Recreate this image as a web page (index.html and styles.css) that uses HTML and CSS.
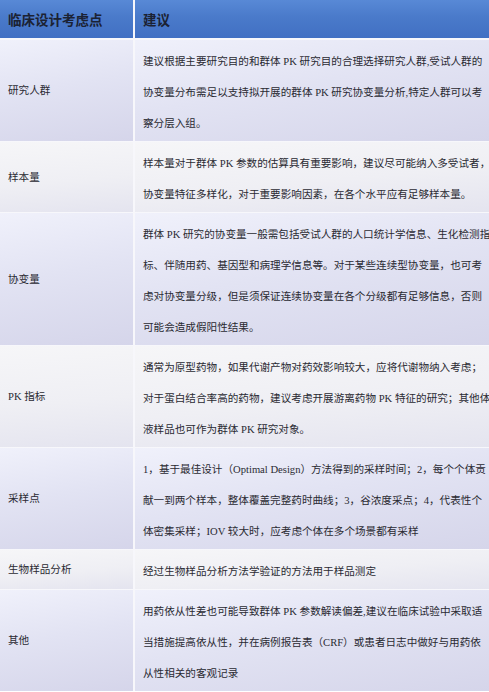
FILE: index.html
```html
<!DOCTYPE html>
<html lang="zh-CN">
<head>
<meta charset="utf-8">
<title>临床设计考虑点</title>
<link rel="stylesheet" href="styles.css">
</head>
<body>
<div class="table">
  <div class="hcell">临床设计考虑点</div>
  <div class="hcell">建议</div>

  <div class="cell label tint">研究人群</div>
  <div class="cell text tint">建议根据主要研究目的和群体 PK 研究目的合理选择研究人群,受试人群的<br>协变量分布需足以支持拟开展的群体 PK 研究协变量分析,特定人群可以考<br>察分层入组。</div>

  <div class="cell label pale">样本量</div>
  <div class="cell text pale">样本量对于群体 PK 参数的估算具有重要影响，建议尽可能纳入多受试者，<br>协变量特征多样化，对于重要影响因素，在各个水平应有足够样本量。</div>

  <div class="cell label tint">协变量</div>
  <div class="cell text tint">群体 PK 研究的协变量一般需包括受试人群的人口统计学信息、生化检测指<br>标、伴随用药、基因型和病理学信息等。对于某些连续型协变量，也可考<br>虑对协变量分级，但是须保证连续协变量在各个分级都有足够信息，否则<br>可能会造成假阳性结果。</div>

  <div class="cell label pale">PK 指标</div>
  <div class="cell text pale">通常为原型药物，如果代谢产物对药效影响较大，应将代谢物纳入考虑；<br>对于蛋白结合率高的药物，建议考虑开展游离药物 PK 特征的研究；其他体<br>液样品也可作为群体 PK 研究对象。</div>

  <div class="cell label tint">采样点</div>
  <div class="cell text tint">1，基于最佳设计（Optimal Design）方法得到的采样时间；2，每个个体贡<br>献一到两个样本，整体覆盖完整药时曲线；3，谷浓度采点；4，代表性个<br>体密集采样；IOV 较大时，应考虑个体在多个场景都有采样</div>

  <div class="cell label pale">生物样品分析</div>
  <div class="cell text pale">经过生物样品分析方法学验证的方法用于样品测定</div>

  <div class="cell label tint">其他</div>
  <div class="cell text tint">用药依从性差也可能导致群体 PK 参数解读偏差,建议在临床试验中采取适<br>当措施提高依从性，并在病例报告表（CRF）或患者日志中做好与用药依<br>从性相关的客观记录</div>
</div>
</body>
</html>
```

FILE: styles.css
```css
html, body {
  margin: 0;
  padding: 0;
  background: #ffffff;
}

body {
  width: 489px;
  height: 692px;
  overflow: hidden;
  font-family: "Liberation Serif", "Noto Sans CJK SC", sans-serif;
  color: #2a2a32;
}

.table {
  display: grid;
  grid-template-columns: 133px 1fr;
  column-gap: 2px;
  row-gap: 1px;
  background: #f7f7fb;
}

.hcell {
  height: 38px;
  margin-bottom: 1px;
  display: flex;
  align-items: center;
  padding-left: 8px;
  font-family: "Noto Sans CJK SC", sans-serif;
  font-weight: 700;
  font-size: 13.5px;
  color: #1b2233;
  background: linear-gradient(180deg, #5889d6 0%, #4a7aca 45%, #4170c3 100%);
}

.cell {
  font-size: 10.6px;
  line-height: 31px;
  padding-top: 6px;
  padding-bottom: 2px;
  white-space: nowrap;
}

.label {
  padding-left: 8px;
  display: flex;
  align-items: center;
  padding-top: 2px;
}

.text {
  padding-left: 8px;
}

.tint {
  background: linear-gradient(170deg, #f0f1fb 0%, #e2e3f3 45%, #d5d5ea 100%);
}

.pale {
  background: linear-gradient(175deg, #f6f6f8 0%, #efeff4 55%, #e4e4ef 100%);
}
```
